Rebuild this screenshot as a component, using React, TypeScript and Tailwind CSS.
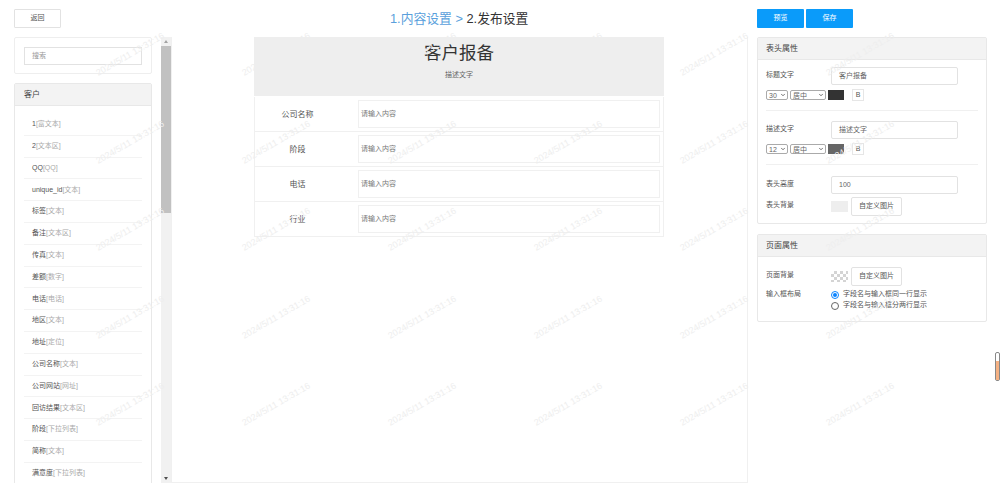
import { ChevronDown } from 'lucide-react';

const fields = [
  ['1', '富文本'], ['2', '文本区'], ['QQ', 'QQ'], ['unique_id', '文本'], ['标签', '文本'], ['备注', '文本区'],
  ['传真', '文本'], ['差额', '数字'], ['电话', '电话'], ['地区', '文本'], ['地址', '定位'], ['公司名称', '文本'],
  ['公司网站', '网址'], ['回访结果', '文本区'], ['阶段', '下拉列表'], ['简称', '文本'], ['满意度', '下拉列表'],
];

const formRows = ['公司名称', '阶段', '电话', '行业'];

function SelectBox({ value, width }: { value: string; width: string }) {
  return (
    <div className={`${width} h-[10px] mr-[2px] pl-[2px] pr-[1px] border border-[#aaa] rounded-[2px] flex items-center justify-between text-[7px] leading-none text-[#666] bg-white`}>
      <span>{value}</span>
      <ChevronDown className="w-[6px] h-[6px] text-[#444]" strokeWidth={3} />
    </div>
  );
}

function TextStyleRow({ size, color }: { size: string; color: string }) {
  return (
    <div className="flex items-center mt-[4px] h-[12px]">
      <SelectBox value={size} width="w-[22px]" />
      <SelectBox value="居中" width="w-[36px]" />
      <div className={`w-[16px] h-[10px] ${color}`} />
      <div className="w-[12px] h-[12px] ml-[8px] border border-[#e6e6e6] text-[7px] flex items-center justify-center text-[#555]">B</div>
    </div>
  );
}

function TextInput({ value }: { value: string }) {
  return (
    <div className="w-[127px] h-[18px] border border-[#e2e2e2] rounded-[2px] pl-[7px] flex items-center text-[7px] text-[#666]">
      {value}
    </div>
  );
}

function ImageButton() {
  return (
    <div className="w-[51px] h-[19px] ml-[3px] border border-[#e2e2e2] rounded-[2px] flex items-center justify-center text-[7px] text-[#555]">
      自定义图片
    </div>
  );
}

function Watermarks() {
  const cells = [];
  for (let i = 0; i < 30; i++) cells.push(i);
  return (
    <div className="absolute left-[57px] top-[11px] w-[876px] grid grid-cols-6 auto-rows-[87.6px] pointer-events-none">
      {cells.map((i) => (
        <div key={i} className="flex items-center justify-center">
          <span className="text-[9px] whitespace-nowrap text-[#eeeeee] -rotate-30">2024/5/11 13:31:16</span>
        </div>
      ))}
    </div>
  );
}

export default function App() {
  return (
    <div className="relative w-[1000px] h-[503px] overflow-hidden bg-white text-[#444] font-['Liberation_Sans','Noto_Sans_CJK_SC',sans-serif]">
      {/* Top bar */}
      <div className="flex h-[37px] pt-[9px]">
        <div className="ml-[14px] w-[47px] h-[19px] border border-[#e2e2e2] rounded-[1px] flex items-center justify-center text-[7px] text-[#555]">返回</div>
        <div className="ml-[329px] text-[12.8px] leading-[19px] whitespace-nowrap">
          <span className="text-[#5a9fdc]">1.内容设置 &gt; </span>
          <span className="text-[#333]">2.发布设置</span>
        </div>
        <div className="flex ml-auto mr-[147px] gap-[2px]">
          <div className="w-[47px] h-[19px] bg-[#0a9bfa] rounded-[1px] flex items-center justify-center text-[7px] text-white">预览</div>
          <div className="w-[47px] h-[19px] bg-[#0a9bfa] rounded-[1px] flex items-center justify-center text-[7px] text-white">保存</div>
        </div>
      </div>

      <div className="flex h-[446px] pl-[14px]">
        {/* Field list */}
        <div className="w-[138px] h-full overflow-hidden">
          <div className="h-[37px] border border-[#eeeeee] rounded-[2px] pt-[9px] px-[9px]">
            <div className="h-[18px] border border-[#e2e2e2] pl-[7px] flex items-center text-[7px] text-[#999]">搜索</div>
          </div>
          <div className="mt-[9px] border border-[#e8e8e8] rounded-[2px]">
            <div className="h-[22px] bg-[#f3f3f3] border-b border-[#e8e8e8] px-[9px] flex items-center text-[8px] text-[#444]">客户</div>
            <div className="pt-[8px] px-[9px]">
              {fields.map(([name, type]) => (
                <div key={name} className="h-[21.8px] border-b border-[#f3f3f3] pl-[8px] flex items-center text-[7px] whitespace-nowrap">
                  <span className="text-[#555]">{name}</span>
                  <span className="text-[#aaa]">[{type}]</span>
                </div>
              ))}
            </div>
          </div>
        </div>

        {/* Scrollbar */}
        <div className="w-[10px] ml-[9px] bg-[#f1f1f1] flex flex-col items-center">
          <div className="h-[9px] flex items-center justify-center w-full">
            <div className="w-0 h-0 border-x-[2.5px] border-x-transparent border-b-[3px] border-b-[#a3a3a3]" />
          </div>
          <div className="w-full h-[167px] bg-[#c1c1c1]" />
          <div className="flex-1" />
          <div className="h-[9px] flex items-center justify-center w-full">
            <div className="w-0 h-0 border-x-[2.5px] border-x-transparent border-t-[3px] border-t-[#505050]" />
          </div>
        </div>

        {/* Form preview */}
        <div className="w-[577px] border-x border-b border-[#f0f0f0] flex justify-center">
          <div className="w-[410px] mr-[1px]">
            <div className="h-[59px] bg-[#eeeeee] flex flex-col items-center">
              <div className="mt-[3px] text-[17.5px] leading-[27px] text-[#333]">客户报备</div>
              <div className="mt-[3px] text-[7px] leading-[10px] text-[#666]">描述文字</div>
            </div>
            <div className="mt-[1px]">
              {formRows.map((label) => (
                <div key={label} className="h-[35px] border-x border-b border-[#f0f0f0] flex items-center">
                  <div className="w-[85px] text-center text-[8px] text-[#555] pt-[1px]">{label}</div>
                  <div className="ml-[18px] w-[302px] h-[28px] border border-[#f0f0f0] pl-[2px] flex items-center text-[7px] text-[#777]">请输入内容</div>
                </div>
              ))}
            </div>
          </div>
        </div>

        {/* Properties */}
        <div className="w-[230px] ml-[9px]">
          <div className="h-[187px] border border-[#e8e8e8] rounded-[2px]">
            <div className="h-[22px] bg-[#f3f3f3] border-b border-[#e8e8e8] px-[8px] flex items-center text-[8px] text-[#444]">表头属性</div>
            <div className="px-[8px]">
              <div className="h-[51px] border-b border-[#f0f0f0] pt-[7px]">
                <div className="flex">
                  <div className="w-[65px] text-[7px] leading-[16px] text-[#555]">标题文字</div>
                  <TextInput value="客户报备" />
                </div>
                <TextStyleRow size="30" color="bg-[#333333]" />
              </div>
              <div className="h-[54px] border-b border-[#f0f0f0] pt-[10px]">
                <div className="flex">
                  <div className="w-[65px] text-[7px] leading-[16px] text-[#555]">描述文字</div>
                  <TextInput value="描述文字" />
                </div>
                <TextStyleRow size="12" color="bg-[#666666]" />
              </div>
              <div className="flex pt-[11px]">
                <div className="w-[65px] text-[7px] leading-[16px] text-[#555]">表头高度</div>
                <TextInput value="100" />
              </div>
              <div className="flex items-center mt-[3px]">
                <div className="w-[65px] text-[7px] leading-[16px] text-[#555] -mt-[3px]">表头背景</div>
                <div className="w-[17px] h-[11px] bg-[#eeeeee]" />
                <ImageButton />
              </div>
            </div>
          </div>

          <div className="h-[88px] mt-[10px] border border-[#e8e8e8] rounded-[2px]">
            <div className="h-[22px] bg-[#f3f3f3] border-b border-[#e8e8e8] px-[8px] flex items-center text-[8px] text-[#444]">页面属性</div>
            <div className="px-[8px] pt-[10px]">
              <div className="flex items-center">
                <div className="w-[65px] text-[7px] leading-[16px] text-[#555] -mt-[3px]">页面背景</div>
                <div className="w-[17px] h-[11px] bg-[repeating-conic-gradient(#d4d4d4_0_25%,#ffffff_0_50%)] bg-[length:6px_6px]" />
                <ImageButton />
              </div>
              <div className="flex mt-[1px]">
                <div className="w-[65px] text-[7px] leading-[14px] text-[#555]">输入框布局</div>
                <div className="text-[7px] text-[#555] pt-[2px]">
                  <div className="flex items-center h-[11px]">
                    <div className="w-[8px] h-[8px] rounded-full border border-[#0a84ff] flex items-center justify-center">
                      <div className="w-[4px] h-[4px] rounded-full bg-[#0a84ff]" />
                    </div>
                    <span className="ml-[4px]">字段名与输入框同一行显示</span>
                  </div>
                  <div className="flex items-center h-[11px]">
                    <div className="w-[8px] h-[8px] rounded-full border border-[#666]" />
                    <span className="ml-[4px]">字段名与输入框分两行显示</span>
                  </div>
                </div>
              </div>
            </div>
          </div>
        </div>
      </div>

      {/* Floating handle on the right edge */}
      <div className="absolute left-[995px] top-[352px] w-[5px] h-[29px] border border-[#888] rounded-[2px] bg-white flex flex-col justify-end">
        <div className="h-[19px] bg-[#f5b183]" />
      </div>

      <Watermarks />
    </div>
  );
}
